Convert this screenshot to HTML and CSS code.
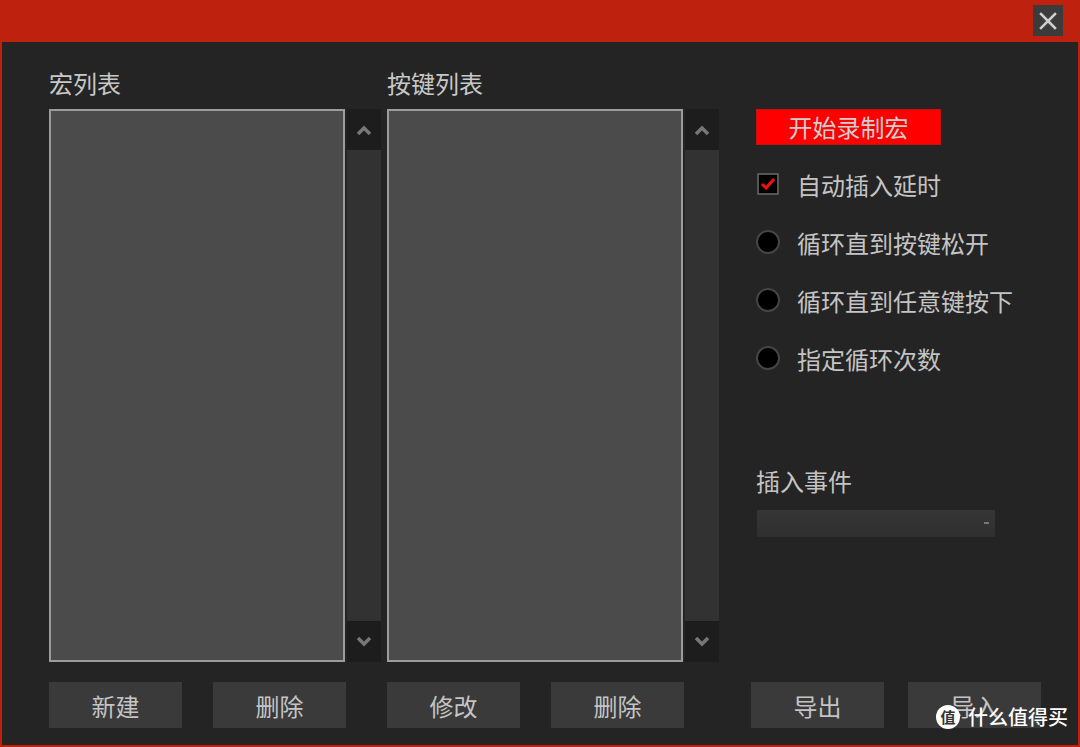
FILE: index.html
```html
<!DOCTYPE html>
<html lang="zh-CN">
<head>
  <meta charset="UTF-8" />
  <title>宏设置</title>
  <link rel="stylesheet" href="styles.css">
</head>
<body>
  <div class="window">
    <div class="titlebar">
      <button class="close-btn" aria-label="关闭">
        <svg width="20" height="20" viewBox="0 0 20 20"><path d="M3 3 L17 17 M17 3 L3 17" stroke="#cfcfcf" stroke-width="2.5" stroke-linecap="square"/></svg>
      </button>
    </div>

    <div class="main">
      <div class="panel">
        <div class="label">宏列表</div>
        <div class="list-wrap">
          <div class="list"></div>
          <div class="scrollbar">
            <div class="arrow">
              <svg width="16" height="12" viewBox="0 0 16 12"><path d="M2 10 L8 4 L14 10" fill="none" stroke="#777" stroke-width="3.5"/></svg>
            </div>
            <div class="track"></div>
            <div class="arrow">
              <svg width="16" height="12" viewBox="0 0 16 12"><path d="M2 2 L8 8 L14 2" fill="none" stroke="#777" stroke-width="3.5"/></svg>
            </div>
          </div>
        </div>
        <div class="btn-row">
          <button class="btn">新建</button>
          <button class="btn">删除</button>
        </div>
      </div>

      <div class="panel">
        <div class="label">按键列表</div>
        <div class="list-wrap">
          <div class="list"></div>
          <div class="scrollbar">
            <div class="arrow">
              <svg width="16" height="12" viewBox="0 0 16 12"><path d="M2 10 L8 4 L14 10" fill="none" stroke="#777" stroke-width="3.5"/></svg>
            </div>
            <div class="track"></div>
            <div class="arrow">
              <svg width="16" height="12" viewBox="0 0 16 12"><path d="M2 2 L8 8 L14 2" fill="none" stroke="#777" stroke-width="3.5"/></svg>
            </div>
          </div>
        </div>
        <div class="btn-row">
          <button class="btn">修改</button>
          <button class="btn">删除</button>
        </div>
      </div>

      <div class="side">
        <div class="side-top">
          <button class="record-btn">开始录制宏</button>
          <div class="option">
            <span class="checkbox">
              <svg width="18" height="18" viewBox="0 0 18 18"><path d="M3 9 L7 13 L15 4" fill="none" stroke="#f01010" stroke-width="3"/></svg>
            </span>
            <span>自动插入延时</span>
          </div>
          <div class="option"><span class="radio"></span><span>循环直到按键松开</span></div>
          <div class="option"><span class="radio"></span><span>循环直到任意键按下</span></div>
          <div class="option"><span class="radio"></span><span>指定循环次数</span></div>

          <div class="event-label">插入事件</div>
          <div class="select"><span class="select-arrow"></span></div>
        </div>
        <div class="btn-row">
          <button class="btn">导出</button>
          <button class="btn">导入</button>
        </div>
      </div>
    </div>

    <div class="watermark">
      <span class="wm-badge">值</span>
      <span>什么值得买</span>
    </div>
  </div>
</body>
</html>
```

FILE: styles.css
```css
* {
  margin: 0;
  padding: 0;
  box-sizing: border-box;
}

body {
  font-family: "Noto Sans CJK SC", "Noto Sans", sans-serif;
  background-color: #242424;
  color: #c4c4c4;
  width: 1080px;
  height: 747px;
  overflow: hidden;
}

.window {
  position: relative;
  width: 1080px;
  height: 747px;
  background-color: #242424;
  border: 2px solid #c0200e;
  border-top: none;
  display: flex;
  flex-direction: column;
}

.titlebar {
  height: 42px;
  background-color: #bf210f;
  margin: 0 -2px;
  display: flex;
  justify-content: flex-end;
  align-items: flex-start;
  padding: 5px 17px 0 0;
}

.close-btn {
  width: 30px;
  height: 31px;
  background-color: #3b3b3b;
  border: none;
  display: flex;
  align-items: center;
  justify-content: center;
}

.main {
  flex: 1;
  display: flex;
  padding: 25px 0 0 47px;
}

.panel {
  width: 332px;
  display: flex;
  flex-direction: column;
}

.panel + .panel {
  margin-left: 6px;
}

.label {
  font-size: 24px;
  line-height: 32px;
  height: 32px;
  margin-bottom: 10px;
  color: #c8c8c8;
}

.list-wrap {
  display: flex;
  height: 553px;
  gap: 2px;
}

.list {
  width: 296px;
  height: 100%;
  background-color: #4b4b4b;
  border: 2px solid #9c9c9c;
}

.scrollbar {
  width: 34px;
  display: flex;
  flex-direction: column;
  background-color: #333;
}

.arrow {
  height: 41px;
  background-color: #1d1d1d;
  display: flex;
  align-items: center;
  justify-content: center;
}

.track {
  flex: 1;
  background-color: #323232;
}

.btn-row {
  display: flex;
  justify-content: space-between;
  width: 297px;
  margin-top: 20px;
}

.btn {
  width: 133px;
  height: 46px;
  background-color: #3a3a3a;
  border: none;
  color: #c4c4c4;
  font-family: "Noto Sans CJK SC", "Noto Sans", sans-serif;
  font-size: 24px;
}

.side {
  width: 290px;
  margin-left: 32px;
  display: flex;
  flex-direction: column;
}

.side-top {
  height: 595px;
  padding: 42px 0 0 5px;
}

.side .btn-row {
  width: 290px;
}

.record-btn {
  width: 185px;
  height: 36px;
  background-color: #fe0000;
  border: 1px solid #c81010;
  color: #cfcfcf;
  font-family: "Noto Sans CJK SC", "Noto Sans", sans-serif;
  font-size: 24px;
  line-height: 32px;
  margin-bottom: 19px;
}

.option {
  display: flex;
  align-items: center;
  height: 40px;
  margin-bottom: 18px;
  font-size: 24px;
  color: #c4c4c4;
}

.checkbox {
  width: 22px;
  height: 22px;
  margin: 0 18px 0 1px;
  background-color: #000;
  border: 2px solid #555;
  display: flex;
  align-items: center;
  justify-content: center;
}

.radio {
  width: 24px;
  height: 24px;
  margin-right: 17px;
  border-radius: 50%;
  background-color: #000;
  border: 2px solid #454545;
}

.event-label {
  margin-top: 87px;
  font-size: 24px;
  line-height: 32px;
  color: #c4c4c4;
}

.select {
  position: relative;
  width: 238px;
  height: 27px;
  margin: 13px 0 0 1px;
  background: linear-gradient(#363636, #2f2f2f);
}

.select-arrow {
  position: absolute;
  right: 6px;
  top: 12px;
  width: 5px;
  height: 2px;
  background-color: #777;
}

.watermark {
  position: absolute;
  right: 10px;
  bottom: 14px;
  display: flex;
  align-items: center;
  gap: 8px;
  color: #fff;
  font-size: 20px;
  font-weight: 500;
}

.wm-badge {
  width: 24px;
  height: 24px;
  border-radius: 50%;
  background-color: #fff;
  color: #333;
  font-size: 15px;
  font-weight: 700;
  display: flex;
  align-items: center;
  justify-content: center;
}
```
